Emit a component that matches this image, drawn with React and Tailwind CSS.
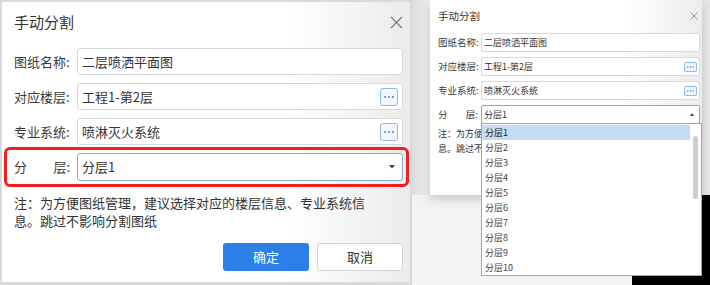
import React from "react";

const cjk = "font-['Microsoft_YaHei','Noto_Sans_CJK_SC',sans-serif]";

const CloseIcon = ({ size, color = "#7a7a7a", w = 1.2 }) => (
  <svg width={size} height={size} viewBox="0 0 12 12">
    <path d="M1 1L11 11M11 1L1 11" stroke={color} strokeWidth={w} fill="none" />
  </svg>
);

// small "..." picker button inside an input
const DotsButton = ({ big }) => (
  <div
    className={
      big
        ? "w-[18px] h-[18px] border border-[#8cb8ec] rounded-[3px] bg-[#f2f7fe] flex items-center justify-center"
        : "w-[13px] h-[10px] border border-[#8cb8ec] rounded-[2px] bg-[#f2f7fe] flex items-center justify-center"
    }
  >
    <svg width={big ? 10 : 7} height="2" viewBox="0 0 10 2">
      <circle cx="1.2" cy="1" r="1" fill="#3f7fdc" />
      <circle cx="5" cy="1" r="1" fill="#3f7fdc" />
      <circle cx="8.8" cy="1" r="1" fill="#3f7fdc" />
    </svg>
  </div>
);

const BigRow = ({ label, value, dots }) => (
  <div className="flex items-center h-[27px]">
    <div className="w-[56px] text-[13px] text-[#3a3a3a] whitespace-nowrap">{label}</div>
    <div className="ml-[7px] flex-1 h-full border border-[#d9d9d9] rounded-[3px] bg-white flex items-center pl-[4px] pr-[4px]">
      <span className="flex-1 text-[13px] text-[#333]">{value}</span>
      {dots && <DotsButton big />}
    </div>
  </div>
);

const SmallRow = ({ label, value, dots }) => (
  <div className="flex items-center h-[19px]">
    <div className="w-[40px] text-[9.5px] text-[#3a3a3a] whitespace-nowrap">{label}</div>
    <div className="ml-[3px] flex-1 h-full border border-[#d9d9d9] rounded-[2px] bg-white flex items-center pl-[2px] pr-[2px]">
      <span className="flex-1 text-[9px] text-[#333]">{value}</span>
      {dots && <DotsButton />}
    </div>
  </div>
);

const LeftDialog = () => (
  <div className="w-[412px] h-[285px] border-l-2 border-t-2 border-r-2 border-b-[3px] border-[#d9d9d9] bg-linear-to-r from-white from-[70%] to-[#ebebeb] pl-[12px] pr-[7px] flex flex-col">
    <div className="mt-[10px] h-[20px] flex items-center justify-between">
      <span className="text-[15px] text-[#333]">手动分割</span>
      <CloseIcon size={13} />
    </div>
    <div className="mt-[16px] flex flex-col gap-[8px]">
      <BigRow label="图纸名称:" value="二层喷洒平面图" />
      <BigRow label="对应楼层:" value="工程1-第2层" dots />
      <BigRow label="专业系统:" value="喷淋灭火系统" dots />
    </div>
    <div className="mt-[2px] -ml-[10px] -mr-[6px] border-[3px] border-[#f51d1d] rounded-[6px] pl-[7px] pr-[3px] py-[3px] flex items-center">
      <div className="w-[56px] flex justify-between text-[13px] text-[#3a3a3a]">
        <span>分</span>
        <span>层:</span>
      </div>
      <div className="ml-[7px] flex-1 h-[28px] border border-[#7fa6e6] rounded-[3px] bg-white flex items-center pl-[4px] pr-[7px]">
        <span className="flex-1 text-[13px] text-[#333]">分层1</span>
        <svg width="6" height="4" viewBox="0 0 6 4">
          <path d="M0 0H6L3 3.5Z" fill="#444" />
        </svg>
      </div>
    </div>
    <p className="mt-[7px] w-[358px] text-[13px] leading-[18px] text-[#333]">
      注：为方便图纸管理，建议选择对应的楼层信息、专业系统信息。跳过不影响分割图纸
    </p>
    <div className="mt-[13px] flex justify-end gap-[8px]">
      <button className="w-[86px] h-[28px] rounded-[3px] bg-[#2b7fe6] text-white text-[13px]">确定</button>
      <button className="w-[86px] h-[28px] rounded-[3px] bg-white border border-[#d4d4d4] text-[#333] text-[13px]">取消</button>
    </div>
  </div>
);

const floors = ["分层1", "分层2", "分层3", "分层4", "分层5", "分层6", "分层7", "分层8", "分层9", "分层10"];

const RightShot = () => (
  <div className="relative w-[298px] h-[285px] flex flex-col bg-[#eeeeee]">
    <div className="flex h-[195px]">
      <div className="w-[18px] bg-linear-to-r from-[#dcdcdc] to-[#f0f0f0]" />
      <div className="relative z-10 w-[272px] bg-linear-to-r from-white from-[72%] to-[#ececec] shadow-[0_4px_9px_rgba(0,0,0,0.18)] pl-[8px] pr-[2px] flex flex-col">
        <div className="mt-[9px] h-[14px] flex items-center justify-between pr-[2px]">
          <span className="text-[10.5px] text-[#333]">手动分割</span>
          <CloseIcon size={8} color="#888" w={1.3} />
        </div>
        <div className="mt-[10px] flex flex-col gap-[5px]">
          <SmallRow label="图纸名称:" value="二层喷洒平面图" />
          <SmallRow label="对应楼层:" value="工程1-第2层" dots />
          <SmallRow label="专业系统:" value="喷淋灭火系统" dots />
          <div className="flex items-center h-[19px]">
            <div className="w-[40px] flex justify-between text-[9.5px] text-[#3a3a3a]">
              <span>分</span>
              <span>层:</span>
            </div>
            <div className="ml-[3px] flex-1 h-full border border-[#7fa6e6] rounded-[2px] bg-white flex items-center pl-[2px] pr-[5px]">
              <span className="flex-1 text-[9px] text-[#333]">分层1</span>
              <svg width="4" height="3" viewBox="0 0 4 3">
                <path d="M0 3H4L2 0Z" fill="#444" />
              </svg>
            </div>
          </div>
        </div>
        {/* note: the open list covers everything right of the labels */}
        <div className="mt-[2px] w-[43px] overflow-hidden">
          <p className="w-[247px] text-[9px] leading-[15px] text-[#333]">
            注：为方便图纸管理，建议选择对应的楼层信息、专业系统信息。跳过不影响分割图纸
          </p>
        </div>
      </div>
      <div className="flex-1 bg-[#e6e6e6]" />
    </div>
    <div className="flex flex-1">
      <div className="w-[220px] bg-[#f3f3f3]" />
      <div className="flex-1 bg-black" />
    </div>

    {/* open select list */}
    <div className="absolute z-20 left-[69px] top-[123px] w-[221px] h-[153px] bg-white border border-[#74b4dc] flex pt-[1px]">
      <div className="w-[208px] flex flex-col">
        {floors.map((f, i) => (
          <div
            key={f}
            className={
              i === 0
                ? "h-[15px] leading-[15px] pl-[3px] text-[9px] text-[#222] bg-[#c5dcf3]"
                : "h-[15px] leading-[15px] pl-[3px] text-[9px] text-[#444]"
            }
          >
            {f}
          </div>
        ))}
      </div>
      <div className="flex-1 flex justify-center pt-[11px]">
        <div className="w-[5px] h-[63px] rounded-full bg-[#cdcdcd]" />
      </div>
    </div>
  </div>
);

export default function App() {
  return (
    <div className={`w-[710px] h-[285px] flex bg-white overflow-hidden ${cjk}`}>
      <LeftDialog />
      <RightShot />
    </div>
  );
}
